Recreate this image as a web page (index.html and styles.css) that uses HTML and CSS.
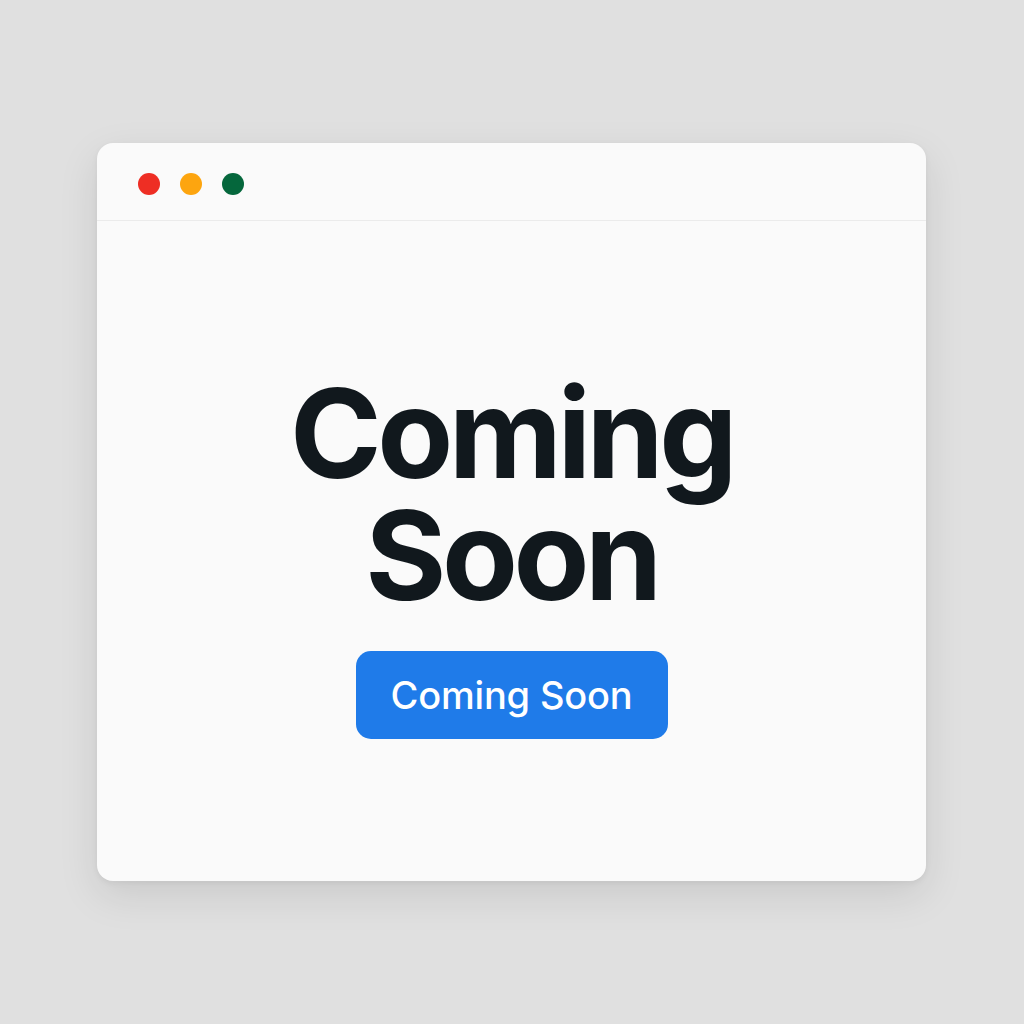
FILE: index.html
```html
<!DOCTYPE html>
<html lang="en">
<head>
<meta charset="utf-8">
<title>Coming Soon</title>
<link rel="stylesheet" href="styles.css">
</head>
<body>
  <div class="window">
    <div class="titlebar">
      <span class="dot dot-red"></span>
      <span class="dot dot-yellow"></span>
      <span class="dot dot-green"></span>
    </div>
    <main class="content">
      <h1 class="headline">Coming<br>Soon</h1>
      <button class="cta">Coming Soon</button>
    </main>
  </div>
</body>
</html>
```

FILE: styles.css
```css
html, body {
  margin: 0;
  padding: 0;
}
body {
  width: 1024px;
  height: 1024px;
  background: #e0e0e0;
  font-family: Inter, "Noto Sans", "Liberation Sans", sans-serif;
  padding: 143px 0 0 97px;
  box-sizing: border-box;
}
.window {
  width: 829px;
  height: 738px;
  background: #fafafa;
  border-radius: 16px;
  box-shadow: 0 14px 40px rgba(0, 0, 0, 0.10), 0 2px 6px rgba(0, 0, 0, 0.05);
  display: flex;
  flex-direction: column;
  overflow: hidden;
}
.titlebar {
  height: 78px;
  border-bottom: 1px solid #ebebeb;
  display: flex;
  align-items: center;
  gap: 20px;
  padding-left: 41px;
  padding-top: 4px;
  box-sizing: border-box;
}
.dot {
  width: 22px;
  height: 22px;
  border-radius: 50%;
  display: block;
}
.dot-red { background: #ee2e24; }
.dot-yellow { background: #fda50f; }
.dot-green { background: #05673c; }
.content {
  flex: 1;
  display: flex;
  flex-direction: column;
  align-items: center;
  padding-top: 151px;
}
.headline {
  margin: 0;
  font-size: 124px;
  line-height: 122px;
  font-weight: 700;
  color: #11181d;
  text-align: center;
  letter-spacing: -4.5px;
}
.cta {
  margin-top: 35px;
  width: 312px;
  height: 88px;
  border: none;
  border-radius: 15px;
  background: #1f7be9;
  color: #ffffff;
  font-family: Inter, "Noto Sans", "Liberation Sans", sans-serif;
  font-size: 38px;
  font-weight: 500;
  letter-spacing: -0.2px;
  padding: 0;
}
```
